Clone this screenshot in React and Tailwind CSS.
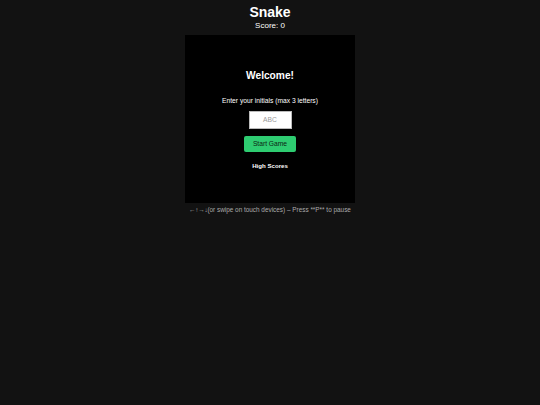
export default function App() {
  return (
    <div
      className="min-h-[405px] w-full bg-[#121212] text-white flex flex-col items-center"
      style={{ fontFamily: '"Liberation Sans", Arial, sans-serif' }}
    >
      <h1 className="mt-[3.5px] text-[14px] leading-[16px] font-bold">Snake</h1>
      <div className="mt-[1.5px] text-[8px] leading-[10px]">Score: 0</div>
      <div className="mt-[3.5px] w-[170px] h-[168px] bg-black flex flex-col items-center pt-[35.5px]">
        <div className="text-[10.2px] leading-[12px] font-bold">Welcome!</div>
        <div className="mt-[14.5px] text-[6.7px] leading-[8px]">Enter your initials (max 3 letters)</div>
        <input
          placeholder="ABC"
          maxLength={3}
          className="mt-[6px] w-[43px] h-[18px] bg-white border border-[#bbb] text-center text-[6.7px] text-black placeholder:text-[#999] outline-none"
        />
        <button className="mt-[7px] w-[52px] h-[16px] bg-[#2ecc71] rounded-[2px] text-[6.7px] text-[#0d1f14] leading-[16px]">
          Start Game
        </button>
        <div className="mt-[10.5px] text-[6.1px] leading-[8px] font-bold">High Scores</div>
      </div>
      <div className="mt-[3px] text-[6.4px] leading-[8px] text-[#aaaaaa]">
        <span className="tracking-[-1px]">← ↑ → ↓ </span>(or swipe on touch devices) – Press **P** to pause
      </div>
    </div>
  );
}
